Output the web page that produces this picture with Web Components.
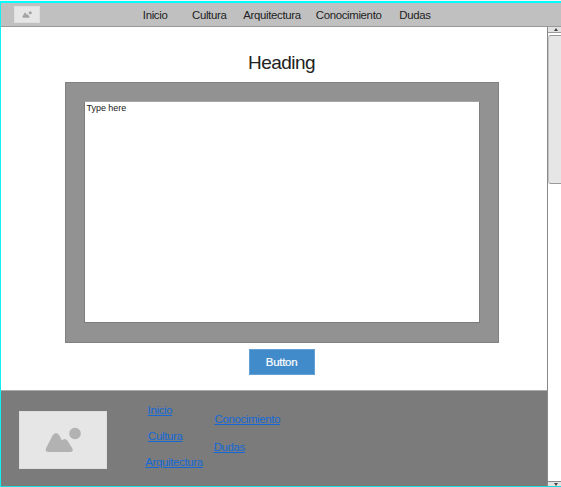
<!DOCTYPE html>
<html lang="es">
<head>
<meta charset="utf-8">
<title>Wireframe</title>
<style>
html, body { margin: 0; height: 100%; overflow: hidden; background: #fff; }
body { font-family: "Liberation Sans", Arial, sans-serif; color: #222; }
</style>
</head>
<body>
<wire-page>
  <site-header slot="header"></site-header>
  <editor-panel slot="main"></editor-panel>
  <site-footer slot="footer"></site-footer>
  <scroll-rail slot="rail"></scroll-rail>
</wire-page>
<script>
class BaseElement extends HTMLElement {
  constructor() {
    super();
    const t = document.createElement('template');
    t.innerHTML = this.constructor.markup;
    this.attachShadow({ mode: 'open' }).append(t.content.cloneNode(true));
  }
}

class WirePage extends BaseElement {
  static markup = `<style>
    :host { display: flex; flex-direction: column; box-sizing: border-box; width: 561px; height: 487px;
      margin: 0; padding-top: 1px; background: #f1f6f6; }
    .frame { flex: 1; min-height: 0; display: flex; flex-direction: column; background: #fff;
      border-top: 2px solid #0ff; border-left: 1px solid #10f2f2; border-bottom: 1px solid #1adada; }
    .row { flex: 1; display: flex; min-height: 0; }
    .col { flex: 1; display: flex; flex-direction: column; min-width: 0; }
    .main { flex: 1; min-height: 0; }
  </style>
  <div class="frame">
    <slot name="header"></slot>
    <div class="row">
      <div class="col"><div class="main"><slot name="main"></slot></div><slot name="footer"></slot></div>
      <slot name="rail"></slot>
    </div>
  </div>`;
}

class ImagePlaceholder extends BaseElement {
  static markup = `<style>
    :host { display: block; box-sizing: border-box; background: #e6e6e6; border: 1px solid #dedede; }
    svg { display: block; width: 100%; height: 100%; fill: var(--glyph, #b2b2b2); }
  </style>
  <svg viewBox="0 0 86 56" preserveAspectRatio="xMidYMid meet">
    <circle cx="55" cy="21.5" r="5.8"/>
    <path d="M26.3 35.8L32.4 23.8Q36 18 39.6 23.8L41.8 28.6Q44.8 25.6 47.4 28.6L52.3 36.2Q53.9 40 50.2 40H28Q24.4 39.6 26.3 35.8Z"/>
  </svg>`;
}

class SiteHeader extends BaseElement {
  static markup = `<style>
    :host { display: flex; box-sizing: border-box; height: 24px; flex: none; background: #c0c0c0;
      border-bottom: 1px solid #999; padding-left: 13px; align-items: center; }
    image-placeholder { width: 26px; height: 17px; --glyph: #a4a4a4; }
    nav { display: grid; grid-template-columns: 49.2px 51.3px 72.5px 83.5px auto; margin-left: 102.8px;
      font-size: 11.4px; letter-spacing: -.33px; line-height: 14px; padding-top: 1px; }
  </style>
  <image-placeholder></image-placeholder>
  <nav><span>Inicio</span><span>Cultura</span><span>Arquitectura</span><span>Conocimiento</span><span>Dudas</span></nav>`;
}

class EditorPanel extends BaseElement {
  static markup = `<style>
    :host { display: flex; flex-direction: column; align-items: center; padding: 24px 0 0 15px; }
    h1 { margin: 0; font-size: 19px; letter-spacing: -.55px; font-weight: 400; line-height: 23px; height: 31px; }
    .panel { box-sizing: border-box; width: 434px; height: 261px; padding: 18px; background: #929292;
      border: 1px solid #818181; }
    .field { box-sizing: border-box; width: 396px; height: 222px; border: 1px solid #7d7d7d;
      border-top-color: #a5a5a5; background: #fff; padding: 0 2px; font-size: 9px; letter-spacing: -.03px; line-height: 12px; }
    .btn { box-sizing: border-box; width: 66px; height: 26px; margin-top: 6px; background: #428bca;
      border: 1px solid #62a0d6; color: #fff; text-align: center; font-size: 11.4px; letter-spacing: -.25px;
      line-height: 24px; -webkit-text-stroke: .2px #fff; }
  </style>
  <h1>Heading</h1>
  <div class="panel"><div class="field">Type here</div></div>
  <div class="btn" role="button">Button</div>`;
}

class SiteFooter extends BaseElement {
  static markup = `<style>
    :host { display: flex; box-sizing: border-box; height: 96px; flex: none; background: #7b7b7b;
      border-top: 1px solid #a9acab; padding: 20px 0 0 18px; align-items: flex-start; }
    image-placeholder { width: 88px; height: 58px; }
    .links { display: flex; flex-direction: column; align-items: flex-start; font-size: 11.4px;
      letter-spacing: -.33px; line-height: 13px; }
    .first { width: 68.4px; margin: -7px 0 0 38.3px; gap: 13px; }
    .second { margin-top: 2px; gap: 15px; }
    a { color: #1469d6; text-decoration: underline; }
    .first a:nth-child(1) { margin-left: 2.3px; }
    .first a:nth-child(2) { margin-left: 2.8px; }
    .second a:nth-child(1) { margin-left: .8px; }
  </style>
  <image-placeholder></image-placeholder>
  <div class="links first"><a>Inicio</a><a>Cultura</a><a>Arquitectura</a></div>
  <div class="links second"><a>Conocimiento</a><a>Dudas</a></div>`;
}

class ScrollRail extends BaseElement {
  static markup = `<style>
    :host { display: flex; flex-direction: column; box-sizing: border-box; width: 14px; flex: none;
      border-left: 1px solid #888; background: #fff; }
    .arrow { box-sizing: border-box; height: 6px; flex: none; background: #e2e2e2; display: flex;
      justify-content: center; align-items: center; padding-left: 2px; }
    .up { border-bottom: 1px solid #999; }
    .down { border-top: 1px solid #888; height: 5px; }
    svg { width: 4px; height: 3px; display: block; fill: #444; }
    .track { flex: 1; padding-top: 2px; }
    .thumb { box-sizing: border-box; height: 149px; background: #e6e6e6; border: 1px solid #999;
      border-right: 0; border-left-color: #c4c4c4; border-radius: 3px 0 0 3px; }
  </style>
  <div class="arrow up"><svg viewBox="0 0 4 3"><path d="M0 3L2 0L4 3Z"/></svg></div>
  <div class="track"><div class="thumb"></div></div>
  <div class="arrow down"><svg viewBox="0 0 4 3"><path d="M0 0H4L2 3Z"/></svg></div>`;
}

customElements.define('image-placeholder', ImagePlaceholder);
customElements.define('site-header', SiteHeader);
customElements.define('editor-panel', EditorPanel);
customElements.define('site-footer', SiteFooter);
customElements.define('scroll-rail', ScrollRail);
customElements.define('wire-page', WirePage);
</script>
</body>
</html>
